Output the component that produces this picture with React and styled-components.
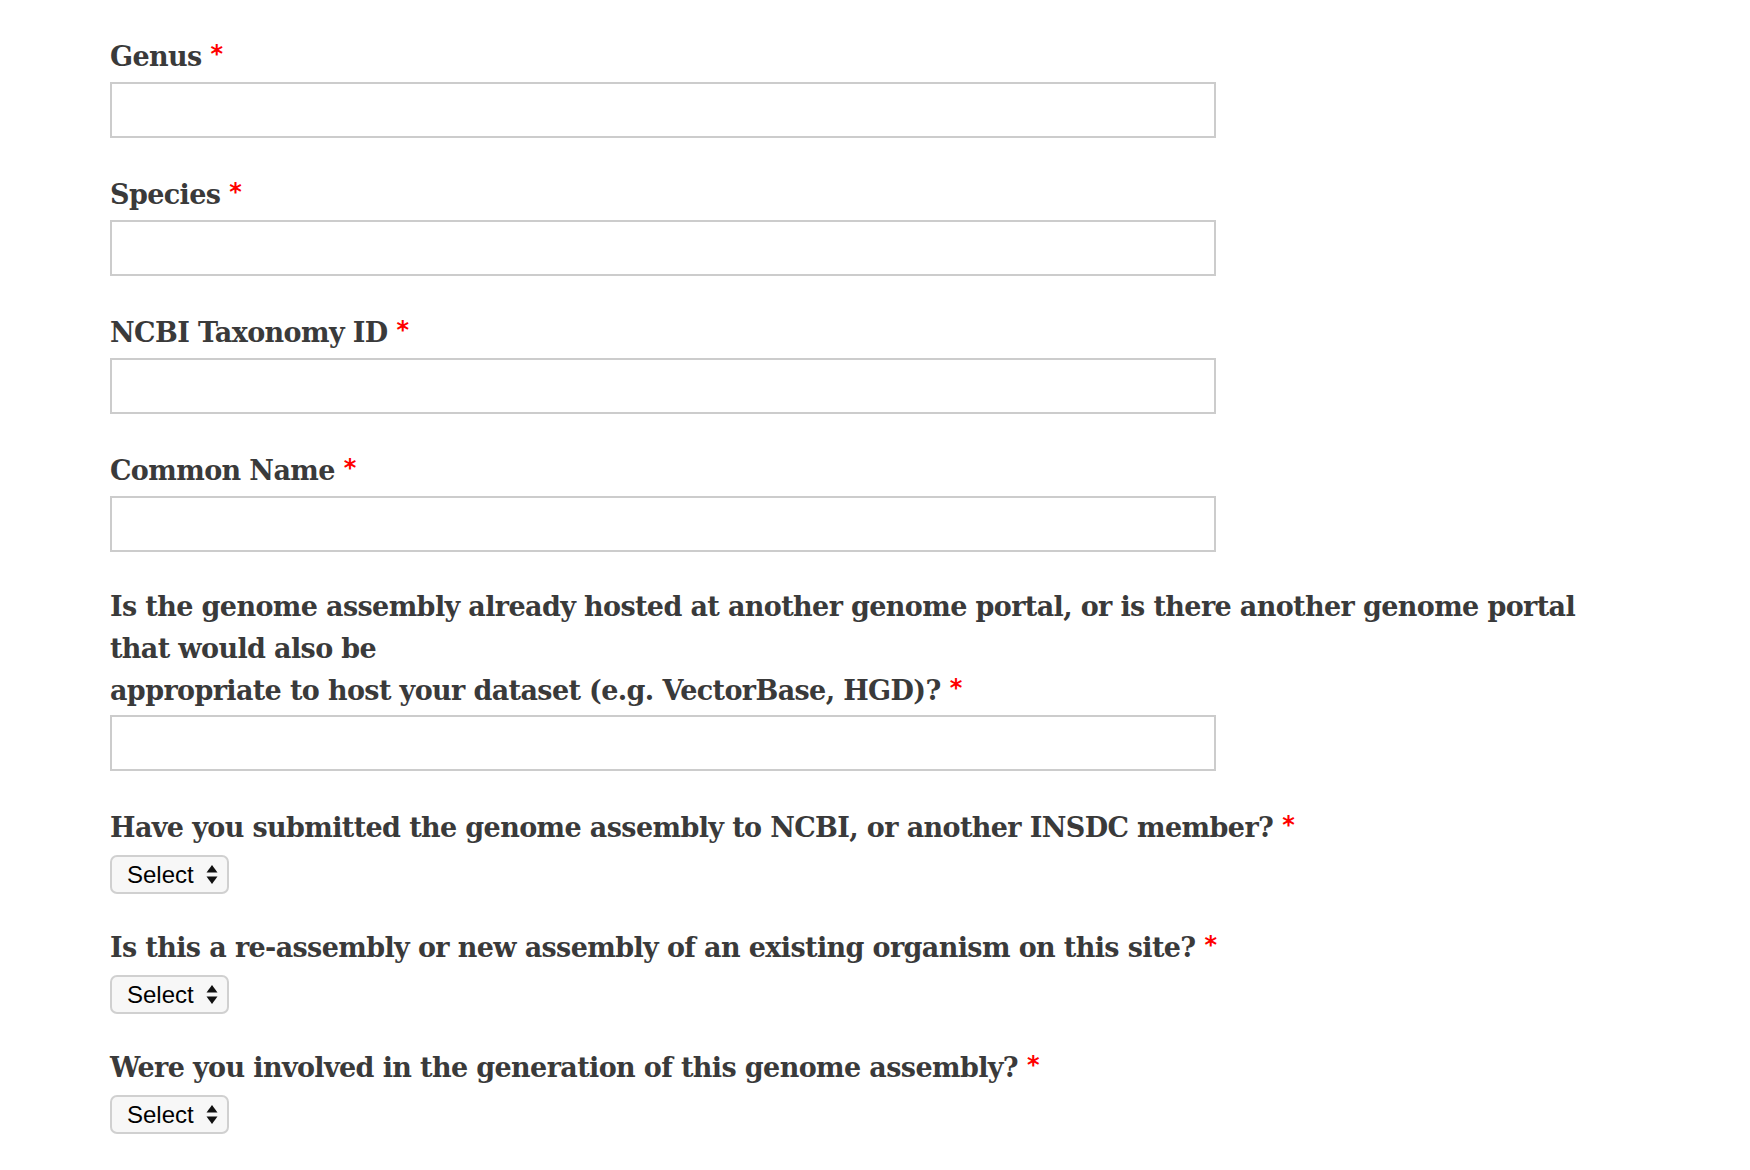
import React from 'react';
import styled, { createGlobalStyle } from 'styled-components';

const GlobalStyle = createGlobalStyle`
    body {
        margin: 0;
        background: #fff;
    }
`;

const Form = styled.form`
    width: 1500px;
    padding: 34px 0 40px 110px;
`;

const Field = styled.div`
    margin-bottom: ${props => props.compact ? '31px' : '34px'};
`;

const Label = styled.label`
    display: block;
    padding-top: ${props => props.lift ? 0 : 2}px;
    margin-bottom: ${props => props.gap || 4}px;
    font-family: "DejaVu Serif", Georgia, serif;
    font-weight: bold;
    font-size: 27px;
    letter-spacing: -0.62px;
    line-height: 42px;
    color: #3a3a3a;
`;

const Required = styled.span`
    color: #f00;
    font-family: "DejaVu Sans", sans-serif;
    font-size: 24px;
    line-height: 36px;
    vertical-align: top;
    margin-left: 9px;
`;

const TextInput = styled.input`
    display: block;
    box-sizing: border-box;
    width: 1106px;
    height: 56px;
    margin: 0;
    border: 2px solid #ccc;
    border-radius: 0;
    background: #fff;
`;

const SelectWrap = styled.div`
    position: relative;
    display: inline-block;
`;

const Select = styled.select`
    appearance: none;
    -webkit-appearance: none;
    box-sizing: border-box;
    width: 119px;
    height: 39px;
    margin: 0;
    padding: 0 0 0 15px;
    border: 2px solid #d0d0d0;
    border-radius: 7px;
    background: #f7f7f7;
    font-family: "Liberation Sans", Arial, sans-serif;
    font-size: 24px;
    color: #000;
`;

const Arrows = styled.svg`
    position: absolute;
    right: 11px;
    top: 10px;
    pointer-events: none;
`;

function TextField({ label }) {
    return (
        <Field>
            <Label>{label}<Required>*</Required></Label>
            <TextInput type="text" />
        </Field>
    );
}

function SelectField({ label }) {
    return (
        <Field compact>
            <Label gap={6}>{label}<Required>*</Required></Label>
            <SelectWrap>
                <Select defaultValue="">
                    <option value="">Select</option>
                    <option value="yes">Yes</option>
                    <option value="no">No</option>
                </Select>
                <Arrows width="12" height="19" viewBox="0 0 12 19">
                    <path d="M6 0 L11.5 7.5 H0.5 Z" fill="#111" />
                    <path d="M6 19 L11.5 11.5 H0.5 Z" fill="#111" />
                </Arrows>
            </SelectWrap>
        </Field>
    );
}

export default function App() {
    return (
        <>
            <GlobalStyle />
            <Form>
                <TextField label="Genus" />
                <TextField label="Species" />
                <TextField label="NCBI Taxonomy ID" />
                <TextField label="Common Name" />
                <Field>
                    <Label lift gap={3}>
                        Is the genome assembly already hosted at another genome portal, or is there another genome portal that would also be<br />
                        appropriate to host your dataset (e.g. VectorBase, HGD)?<Required>*</Required>
                    </Label>
                    <TextInput type="text" />
                </Field>
                <SelectField label="Have you submitted the genome assembly to NCBI, or another INSDC member?" />
                <SelectField label="Is this a re-assembly or new assembly of an existing organism on this site?" />
                <SelectField label="Were you involved in the generation of this genome assembly?" />
            </Form>
        </>
    );
}
